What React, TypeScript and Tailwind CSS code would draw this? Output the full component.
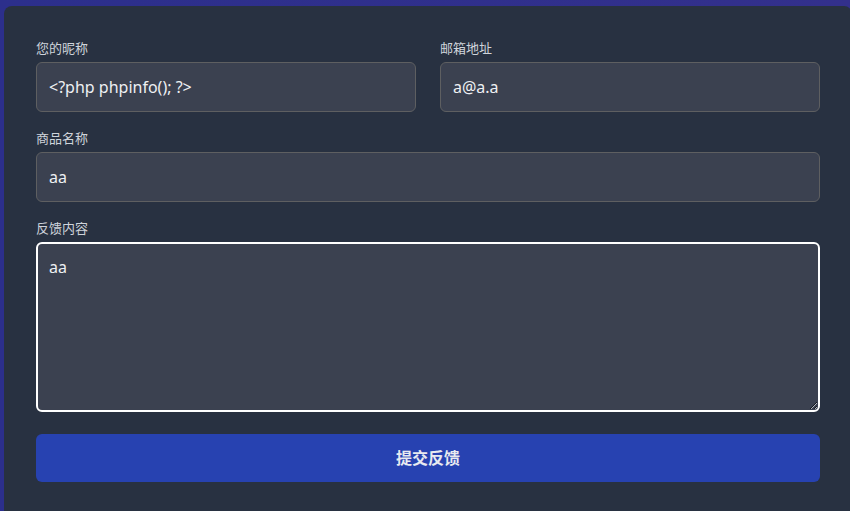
const inputClass =
  "w-full rounded-md border border-[#5e5f61] bg-[#3b4150] px-3 py-3 text-[16px] leading-6 text-[#eef0f3] outline-none";

function Field({ label, value }: { label: string; value: string }) {
  return (
    <label className="flex flex-col">
      <span className="mb-1 text-[13px] leading-5 text-[#cfd4db]">{label}</span>
      <input className={inputClass} defaultValue={value} />
    </label>
  );
}

export default function App() {
  return (
    <div
      className="h-[511px] w-[850px] overflow-hidden bg-[linear-gradient(90deg,#2c2f8c_0%,#33308c_100%)] pl-1 pt-[6px]"
      style={{ fontFamily: '"Noto Sans", "Noto Sans CJK SC", sans-serif' }}
    >
      <div className="h-[540px] w-[848px] rounded-lg bg-[#283141] px-8 pt-8">
        <form className="flex flex-col gap-4">
          <div className="grid grid-cols-2 gap-6">
            <Field label="您的昵称" value="<?php phpinfo(); ?>" />
            <Field label="邮箱地址" value="a@a.a" />
          </div>
          <Field label="商品名称" value="aa" />
          <label className="flex flex-col">
            <span className="mb-1 text-[13px] leading-5 text-[#cfd4db]">反馈内容</span>
            <textarea
              className="h-[170px] w-full rounded-md border-2 border-white bg-[#3b4150] px-[11px] py-[11px] text-[16px] leading-6 text-[#eef0f3] outline-none"
              defaultValue="aa"
            />
          </label>
          <button
            type="button"
            className="mt-[6px] h-12 w-full rounded-md bg-[#2742b1] text-[16px] font-bold text-[#e8eaf0]"
          >
            提交反馈
          </button>
        </form>
      </div>
    </div>
  );
}
